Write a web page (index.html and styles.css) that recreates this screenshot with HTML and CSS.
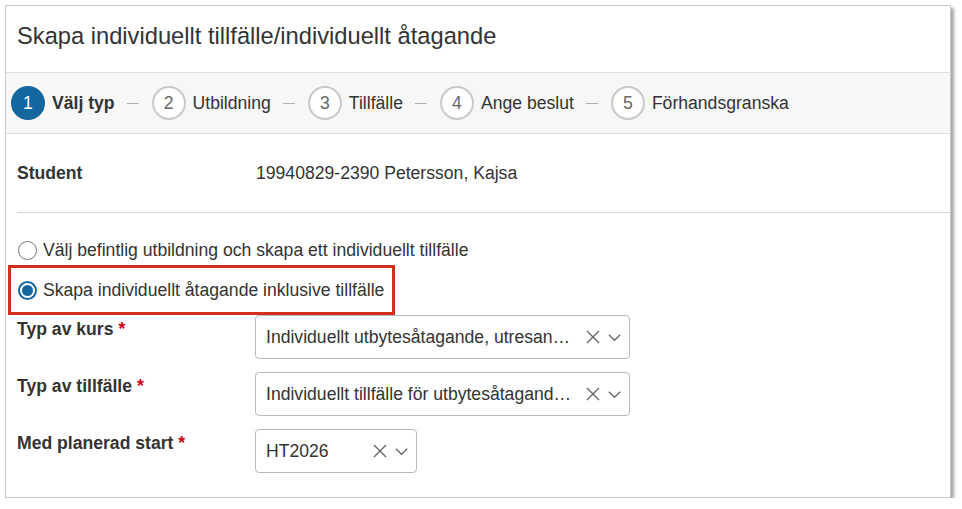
FILE: index.html
```html
<!DOCTYPE html>
<html lang="sv">
<head>
<meta charset="utf-8">
<title>Skapa individuellt tillfälle</title>
<link rel="stylesheet" href="styles.css">
</head>
<body>
<div class="frame">
  <div class="header">Skapa individuellt tillfälle/individuellt åtagande</div>
  <div class="stepper">
    <div class="step active"><span class="num">1</span><span class="label">Välj typ</span></div>
    <span class="sep"></span>
    <div class="step"><span class="num">2</span><span class="label">Utbildning</span></div>
    <span class="sep"></span>
    <div class="step"><span class="num">3</span><span class="label">Tillfälle</span></div>
    <span class="sep"></span>
    <div class="step"><span class="num">4</span><span class="label">Ange beslut</span></div>
    <span class="sep"></span>
    <div class="step"><span class="num">5</span><span class="label">Förhandsgranska</span></div>
  </div>
  <div class="content">
    <div class="student-row">
      <span class="flabel">Student</span>
      <span class="value">19940829-2390 Petersson, Kajsa</span>
    </div>
    <div class="divider"></div>
    <div class="radios">
      <label class="radio"><span class="dot"></span>Välj befintlig utbildning och skapa ett individuellt tillfälle</label>
      <label class="radio checked highlight"><span class="dot"></span>Skapa individuellt åtagande inklusive tillfälle</label>
    </div>
    <div class="form">
      <div class="row">
        <span class="flabel">Typ av kurs <span class="req">*</span></span>
        <div class="select wide"><span class="text">Individuellt utbytesåtagande, utresan…</span><span class="icons"><svg class="x" viewBox="0 0 16 16"><path d="M2 2L14 14M14 2L2 14"/></svg><svg class="chev" viewBox="0 0 16 16"><path d="M2 5L8 11L14 5"/></svg></span></div>
      </div>
      <div class="row">
        <span class="flabel">Typ av tillfälle <span class="req">*</span></span>
        <div class="select wide"><span class="text">Individuellt tillfälle för utbytesåtagand…</span><span class="icons"><svg class="x" viewBox="0 0 16 16"><path d="M2 2L14 14M14 2L2 14"/></svg><svg class="chev" viewBox="0 0 16 16"><path d="M2 5L8 11L14 5"/></svg></span></div>
      </div>
      <div class="row">
        <span class="flabel">Med planerad start <span class="req">*</span></span>
        <div class="select narrow"><span class="text">HT2026</span><span class="icons"><svg class="x" viewBox="0 0 16 16"><path d="M2 2L14 14M14 2L2 14"/></svg><svg class="chev" viewBox="0 0 16 16"><path d="M2 5L8 11L14 5"/></svg></span></div>
      </div>
    </div>
  </div>
</div>
</body>
</html>
```
FILE: styles.css
```css
* { box-sizing: border-box; }
html, body { margin: 0; padding: 0; background: #fff; }
body {
  font-family: "Liberation Sans", Arial, sans-serif;
  color: #333;
  font-size: 17.6px;
}
.frame {
  margin: 5px 0 0 5px;
  width: 946px;
  height: 493px;
  border: 1px solid #c6c6c6;
  box-shadow: 3px 3px 3px rgba(0,0,0,0.35);
  background: #fff;
}
.header {
  height: 66px;
  padding: 0 0 6px 11px;
  display: flex;
  align-items: center;
  font-size: 23.7px;
  color: #333;
}
.stepper {
  height: 62px;
  background: #f7f7f8;
  border-top: 1px solid #dfdfe4;
  border-bottom: 1px solid #dfdfe4;
  display: flex;
  align-items: center;
  padding-left: 5px;
}
.step { display: flex; align-items: center; }
.num {
  width: 34px;
  height: 34px;
  border-radius: 50%;
  border: 2px solid #c9c9cc;
  background: #fff;
  color: #666;
  display: flex;
  align-items: center;
  justify-content: center;
  font-size: 17.6px;
}
.label { margin-left: 7px; font-size: 17.6px; color: #333; }
.step.active .num { background: #14669f; border-color: #14669f; color: #fff; }
.step.active .label { font-weight: bold; }
.sep {
  width: 12px;
  height: 1px;
  background: #b0b0b0;
  margin: 1px 13px 0 12px;
}
.content { padding-left: 11px; }
.student-row {
  height: 78px;
  display: flex;
  align-items: center;
}
.flabel { font-weight: bold; width: 238px; flex: none; color: #333; }
.student-row .flabel { width: 239px; }
.value { color: #333; }
.divider { border-top: 1px solid #d4d4d8; }
.radios { padding-top: 26px; display: flex; flex-direction: column; }
.radio { display: flex; align-items: center; height: 23px; margin-bottom: 16px; }
.dot {
  width: 19px; height: 19px;
  border-radius: 50%;
  border: 1.5px solid #777;
  margin: 0 6px 0 1px;
  background: #fff;
  display: flex; align-items: center; justify-content: center;
}
.radio.checked .dot { border: 2px solid #14669f; }
.radio.checked .dot::after {
  content: ""; width: 11px; height: 11px; border-radius: 50%; background: #14669f;
}
.highlight {
  outline: 3px solid #d22f1f;
  outline-offset: 0;
  margin-left: -6px;
  padding-left: 6px;
  width: 381px;
  height: 44px;
  margin-top: -10px;
  margin-bottom: 0;
}
.form { display: flex; flex-direction: column; gap: 13px; margin-top: 3px; }
.row { display: flex; align-items: flex-start; }
.row .flabel { padding-top: 4px; }
.req { color: #d0021b; font-weight: bold; }
.select {
  height: 44px;
  border: 1px solid #b9b9bd;
  border-radius: 4px;
  display: flex;
  align-items: center;
  padding: 0 7px 0 10px;
  background: #fff;
}
.select.wide { width: 375px; }
.select.narrow { width: 162px; }
.select .text { flex: 1; white-space: nowrap; overflow: hidden; font-size: 17.6px; color: #333; }
.icons { display: flex; align-items: center; gap: 6px; }
.icons svg { fill: none; stroke: #666; stroke-width: 1.4; }
.icons .x { width: 16px; height: 16px; }
.icons .chev { width: 15px; height: 15px; }
```
